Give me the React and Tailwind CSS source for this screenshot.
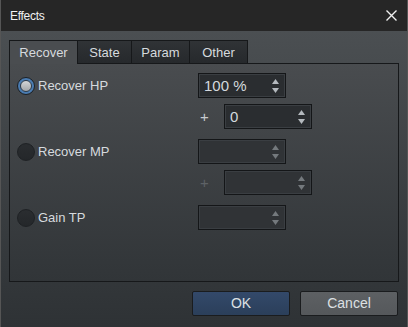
import React from 'react'

function Radio({ checked }) {
  if (checked) {
    return (
      <div className="flex h-[18px] w-[18px] items-center justify-center rounded-full border border-[#1c1f22] bg-[#4a7bb0]">
        <div className="h-[12px] w-[12px] rounded-full border border-[#2d3a48] bg-gradient-to-b from-[#d4d6d8] to-[#a3a6a9]" />
      </div>
    )
  }
  return (
    <div className="h-[18px] w-[18px] rounded-full border border-[#1e2124] bg-gradient-to-b from-[#2a2d30] to-[#24272a]" />
  )
}

function Arrow({ down, color }) {
  return (
    <svg width="7" height="5" viewBox="0 0 7 5">
      <path d={down ? 'M0 0H7L3.5 5Z' : 'M3.5 0L7 5H0Z'} fill={color} />
    </svg>
  )
}

function Spin({ value, disabled }) {
  const arrow = disabled ? '#74797d' : '#b4b9be'
  return (
    <div className={`flex h-[25px] w-[88px] items-center border border-[#141618] shadow-[inset_0_0_0_1px_#3a3e42] ${disabled ? 'bg-[#303336]' : 'bg-[#2a2d30]'}`}>
      <span className="flex-1 pl-[5px] text-[15px] leading-none text-[#d4d9de]">{value}</span>
      <div className="flex flex-col gap-[4px] pr-[6px]">
        <Arrow color={arrow} />
        <Arrow down color={arrow} />
      </div>
    </div>
  )
}

function Row({ checked, label, value, disabled }) {
  return (
    <div className="flex h-[25px] items-center">
      <div className="flex w-[181px] items-center gap-[3px]">
        <Radio checked={checked} />
        <span className="text-[13px] text-[#d6dade]">{label}</span>
      </div>
      <Spin value={value} disabled={disabled} />
    </div>
  )
}

function PlusRow({ value, disabled }) {
  return (
    <div className="flex h-[25px] items-center">
      <div className="w-[181px]" />
      <span className={`ml-[2px] w-[24px] text-[15px] leading-none ${disabled ? 'text-[#5e6266]' : 'text-[#c8ccd0]'}`}>+</span>
      <Spin value={value} disabled={disabled} />
    </div>
  )
}

const tabs = [
  { name: 'Recover', w: 'w-[69px]' },
  { name: 'State', w: 'w-[55px]' },
  { name: 'Param', w: 'w-[59px]' },
  { name: 'Other', w: 'w-[59px]' },
]

export default function App() {
  return (
    <div className="flex h-[327px] w-[408px] flex-col overflow-hidden border-x border-[#555555] font-['Liberation_Sans',Arial,sans-serif]">
      <div className="flex h-[31px] shrink-0 items-center justify-between bg-[#262626] pl-[9px] pr-[10px]">
        <span className="text-[12px] tracking-[-0.3px] text-[#f2f2f2]">Effects</span>
        <svg width="11" height="11" viewBox="0 0 11 11">
          <path d="M0.5 0.5L10.5 10.5M10.5 0.5L0.5 10.5" stroke="#f0f0f0" strokeWidth="1.4" />
        </svg>
      </div>

      <div className="flex flex-1 flex-col bg-gradient-to-b from-[#4b4f52] to-[#2e3235] px-[8px] pt-[9px]">
        <div className="relative z-10 flex h-[24px]">
          {tabs.map((t, i) => (
            <div
              key={t.name}
              className={`${t.w} ${i > 0 ? '-ml-px' : ''} flex items-center justify-center pt-[1px] border border-[#16181a] text-[13px] text-[#d6dade] ${i === 0 ? 'border-b-0 bg-[#4a4d50]' : 'bg-gradient-to-b from-[#303336] to-[#26292c]'}`}
            >
              {t.name}
            </div>
          ))}
        </div>
        <div className="-mt-px h-[219px] border border-[#16181a] bg-gradient-to-b from-[#494c4f] to-[#313538] pl-[7px] pt-[9px]">
          <Row checked label="Recover HP" value="100 %" />
          <div className="mt-[6px]">
            <PlusRow value="0" />
          </div>
          <div className="mt-[10px]">
            <Row label="Recover MP" value="" disabled />
          </div>
          <div className="mt-[6px]">
            <PlusRow value="" disabled />
          </div>
          <div className="mt-[10px]">
            <Row label="Gain TP" value="" disabled />
          </div>
        </div>

        <div className="mt-[9px] flex justify-end gap-[10px] pr-[1px]">
          <button className="h-[25px] w-[98px] rounded-[2px] border border-[#1a1c1e] bg-gradient-to-b from-[#33496a] to-[#2b3f5a] text-[14px] text-[#dde0e3]">
            OK
          </button>
          <button className="h-[25px] w-[98px] rounded-[2px] border border-[#1a1c1e] bg-gradient-to-b from-[#5d6063] to-[#55585b] text-[14px] text-[#dde0e3]">
            Cancel
          </button>
        </div>
      </div>
    </div>
  )
}
